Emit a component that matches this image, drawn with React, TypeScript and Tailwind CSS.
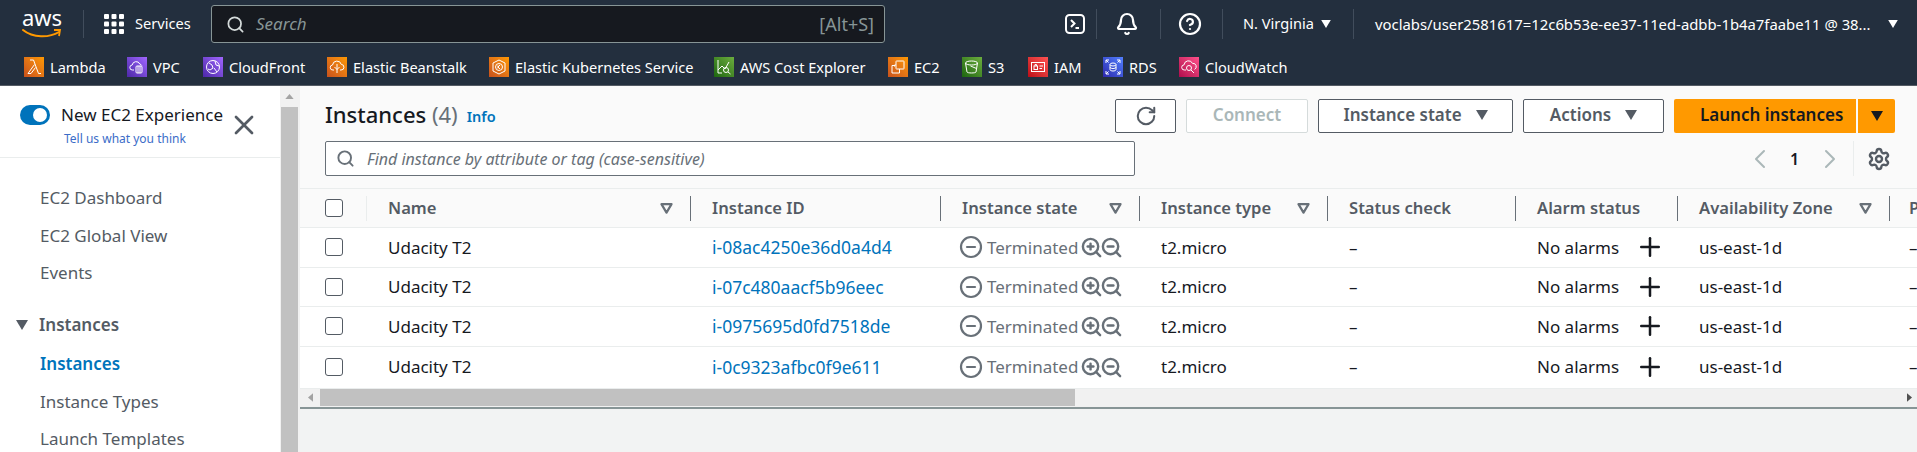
import { Bell, ChevronLeft, ChevronRight, CircleHelp, CircleMinus, Plus, RotateCw, Search, Settings, X, ZoomIn, ZoomOut } from 'lucide-react'
import type { ReactNode } from 'react'

const shortcuts: { name: string; width: string; bg: string; glyph: ReactNode }[] = [
  {
    name: 'Lambda',
    width: 'w-[103px]',
    bg: 'from-[#c8511b] to-[#ff9900]',
    glyph: <path d="M6 3h3.5l5 13.5H17M10.5 7.5L4 16.5h3l4.5-6" />,
  },
  {
    name: 'VPC',
    width: 'w-[76px]',
    bg: 'from-[#4d27a8] to-[#a166ff]',
    glyph: (
      <>
        <path d="M7 13H5.5a2.5 2.5 0 0 1-.3-5 4 4 0 0 1 7.6-1 3 3 0 0 1 2 1.5" />
        <rect x="9" y="9" width="6" height="7" rx="1" />
        <path d="M11 9v7M13 9v7" />
      </>
    ),
  },
  {
    name: 'CloudFront',
    width: 'w-[124px]',
    bg: 'from-[#4d27a8] to-[#a166ff]',
    glyph: (
      <>
        <circle cx="10" cy="10" r="6.5" />
        <path d="M6 6l3 2 1 3-3 2-2-1M12 4l1 4 3 1M11 11l3 4" />
      </>
    ),
  },
  {
    name: 'Elastic Beanstalk',
    width: 'w-[162px]',
    bg: 'from-[#c8511b] to-[#ff9900]',
    glyph: (
      <>
        <path d="M7 13H6a2.5 2.5 0 0 1-.5-5 4.5 4.5 0 0 1 8.8-.6A2.8 2.8 0 0 1 14 13h-1" />
        <path d="M10 7v9M7.5 10L10 12.5 12.5 10" />
      </>
    ),
  },
  {
    name: 'Elastic Kubernetes Service',
    width: 'w-[225px]',
    bg: 'from-[#c8511b] to-[#ff9900]',
    glyph: (
      <>
        <path d="M10 3l6 3v8l-6 3-6-3V6z" />
        <circle cx="10" cy="10" r="3.5" />
        <path d="M9 8.5v3M11 8l-2 2 2 2" />
      </>
    ),
  },
  {
    name: 'AWS Cost Explorer',
    width: 'w-[174px]',
    bg: 'from-[#1b660f] to-[#6cae3e]',
    glyph: (
      <>
        <path d="M4 3v13h4M4 13l4-4 3 3 4-7" />
        <circle cx="12" cy="13" r="2.5" />
        <path d="M14 15l2.5 2" />
      </>
    ),
  },
  {
    name: 'EC2',
    width: 'w-[74px]',
    bg: 'from-[#c8511b] to-[#ff9900]',
    glyph: (
      <>
        <rect x="8" y="4" width="8" height="8" rx="0.5" />
        <path d="M8 8H6.5v1.5M6 8.5H4V16h7.5v-4" />
      </>
    ),
  },
  {
    name: 'S3',
    width: 'w-[66px]',
    bg: 'from-[#1b660f] to-[#6cae3e]',
    glyph: (
      <>
        <ellipse cx="9.5" cy="6" rx="6" ry="2" />
        <path d="M3.5 6l1.5 9c.3 1.3 8.7 1.3 9 0l1.5-9M8.5 9l6 2.5" />
      </>
    ),
  },
  {
    name: 'IAM',
    width: 'w-[75px]',
    bg: 'from-[#bd0816] to-[#ff5252]',
    glyph: (
      <>
        <rect x="3.5" y="5.5" width="13" height="9" />
        <rect x="6" y="9" width="3.5" height="3.5" />
        <path d="M7 9V7.5h1.5V9M11.5 9H15M11.5 11.5H14" />
      </>
    ),
  },
  {
    name: 'RDS',
    width: 'w-[76px]',
    bg: 'from-[#2e27ad] to-[#527fff]',
    glyph: (
      <>
        <ellipse cx="10" cy="7.5" rx="3" ry="1.5" />
        <path d="M7 7.5v5c0 2 6 2 6 0v-5M7 10c0 2 6 2 6 0" />
        <path d="M3 6V3h3M14 3h3v3M3 14v3h3M14 17h3v-3M3 3l2.5 2.5M17 3l-2.5 2.5M3 17l2.5-2.5M17 17l-2.5-2.5" />
      </>
    ),
  },
  {
    name: 'CloudWatch',
    width: 'w-[120px]',
    bg: 'from-[#b0084d] to-[#ff4f8b]',
    glyph: (
      <>
        <path d="M7 13H5.5a2.6 2.6 0 0 1-.4-5.2 4.4 4.4 0 0 1 8.4-1.4 3.2 3.2 0 0 1 2 6" />
        <circle cx="10" cy="11" r="2.5" />
        <path d="M12 13l3 3" />
      </>
    ),
  },
]

const instances = ['i-08ac4250e36d0a4d4', 'i-07c480aacf5b96eec', 'i-0975695d0fd7518de', 'i-0c9323afbc0f9e611']

const navTop = ['EC2 Dashboard', 'EC2 Global View', 'Events']

function Caret({ className }: { className: string }) {
  return (
    <svg viewBox="0 0 12 10" className={className}>
      <path d="M0 0h12L6 10z" fill="currentColor" />
    </svg>
  )
}

function SortCaret() {
  return (
    <svg viewBox="0 0 14 12" className="h-[11px] w-[13px] text-[#687078]">
      <path d="M1.5 1.2h11L7 10.5z" fill="none" stroke="currentColor" strokeWidth="2.4" strokeLinejoin="round" />
    </svg>
  )
}

function Checkbox() {
  return <div className="h-[18px] w-[18px] rounded-[3px] border border-[#545b64] bg-white" />
}

function HeaderIconDivider() {
  return <div className="h-[30px] w-px bg-[#414d5c]" />
}

function Header() {
  return (
    <header className="h-[85px] bg-[#232f3e] text-white">
      <div className="flex h-[48px] items-center">
        <div className="ml-[22px] flex w-[40px] flex-col items-center">
          <span className="mt-[-3px] h-[20px] text-[22px] leading-[20px] tracking-[0px]">aws</span>
          <svg viewBox="0 0 40 10" className="mt-[2px] h-[10px] w-[40px]">
            <path d="M1 1c10 8 26 8 36 2" fill="none" stroke="#ff9900" strokeWidth="2" strokeLinecap="round" />
            <path d="M32 1l6 0-1 6" fill="none" stroke="#ff9900" strokeWidth="1.8" />
          </svg>
        </div>
        <div className="ml-[21px] h-[28px] w-px bg-[#414d5c]" />
        <svg viewBox="0 0 20 20" className="ml-[20px] h-[20px] w-[20px] fill-white">
          <rect x="0" y="0" width="5" height="5" rx="1" />
          <rect x="7.5" y="0" width="5" height="5" rx="1" />
          <rect x="15" y="0" width="5" height="5" rx="1" />
          <rect x="0" y="7.5" width="5" height="5" rx="1" />
          <rect x="7.5" y="7.5" width="5" height="5" rx="1" />
          <rect x="15" y="7.5" width="5" height="5" rx="1" />
          <rect x="0" y="15" width="5" height="5" rx="1" />
          <rect x="7.5" y="15" width="5" height="5" rx="1" />
          <rect x="15" y="15" width="5" height="5" rx="1" />
        </svg>
        <span className="ml-[11px] w-[56px] text-[14.6px] whitespace-nowrap">Services</span>
        <div className="ml-[20px] flex h-[38px] w-[674px] items-center rounded-[3px] border border-[#879596] bg-[#16191f] pr-[10px] pl-[14px]">
          <Search size={19} strokeWidth={2.2} className="text-[#d5dbdb]" />
          <span className="ml-[11px] flex-1 text-[17px] text-[#879596] italic">Search</span>
          <span className="text-[18px] text-[#879596]">[Alt+S]</span>
        </div>
        <svg viewBox="0 0 20 20" className="ml-[180px] h-[20px] w-[20px]" fill="none" stroke="white" strokeWidth="2">
          <rect x="1" y="1" width="18" height="18" rx="3.5" />
          <path d="M6 6l3.5 3.5L6 13M10.5 14H14" />
        </svg>
        <div className="ml-[11px]">
          <HeaderIconDivider />
        </div>
        <Bell size={24} strokeWidth={2.2} className="ml-[18px] text-white" />
        <div className="ml-[21px]">
          <HeaderIconDivider />
        </div>
        <CircleHelp size={24} strokeWidth={2.2} className="ml-[17px] text-white" />
        <div className="ml-[20px]">
          <HeaderIconDivider />
        </div>
        <span className="ml-[20px] w-[71px] text-[14.6px] whitespace-nowrap">N. Virginia</span>
        <Caret className="ml-[7px] h-[8px] w-[10px] text-white" />
        <div className="ml-[22px]">
          <HeaderIconDivider />
        </div>
        <span className="ml-[21px] w-[506px] text-[14.85px] whitespace-nowrap">
          voclabs/user2581617=12c6b53e-ee37-11ed-adbb-1b4a7faabe11 @ 38...
        </span>
        <Caret className="ml-[7px] h-[8px] w-[10px] text-white" />
      </div>
      <div className="flex h-[37px] items-start pt-[9px] pl-[24px]">
        {shortcuts.map((s) => (
          <div key={s.name} className={`flex shrink-0 items-center ${s.width}`}>
            <div className={`h-[20px] w-[20px] bg-gradient-to-tr ${s.bg}`}>
              <svg viewBox="0 0 20 20" className="h-[20px] w-[20px]" fill="none" stroke="white" strokeWidth="1">
                {s.glyph}
              </svg>
            </div>
            <span className="ml-[6px] text-[14.6px] leading-[20px] whitespace-nowrap">{s.name}</span>
          </div>
        ))}
      </div>
    </header>
  )
}

function Sidebar() {
  return (
    <aside className="flex w-[300px] shrink-0 overflow-hidden bg-white">
      <div className="w-[280px]">
        <div className="h-[72px] border-b border-[#eaeded]">
          <div className="flex pt-[19px] pl-[20px]">
            <div className="flex h-[20px] w-[30px] items-center justify-end rounded-full bg-[#0073bb] pr-[3px]">
              <div className="h-[14px] w-[14px] rounded-full bg-white" />
            </div>
            <div className="ml-[11px]">
              <div className="text-[17px] leading-[20px] whitespace-nowrap text-[#16191f]">New EC2 Experience</div>
              <div className="mt-[5px] ml-[3px] text-[12px] leading-[18px] whitespace-nowrap text-[#3b6cc8]">
                Tell us what you think
              </div>
            </div>
            <X size={32} strokeWidth={2} className="mt-[4px] ml-[5px] shrink-0 text-[#545b64]" />
          </div>
        </div>
        <div className="pt-[21px] pl-[40px] text-[17px] text-[#545b64]">
          {navTop.map((n) => (
            <div key={n} className="flex h-[37.5px] items-center">
              {n}
            </div>
          ))}
        </div>
        <div className="mt-[14px] flex h-[38px] items-center pl-[16px] text-[17px] font-semibold text-[#545b64]">
          <Caret className="h-[10px] w-[12px] text-[#545b64]" />
          <span className="ml-[11px]">Instances</span>
        </div>
        <div className="mt-[1px] pl-[40px] text-[17px] text-[#545b64]">
          <div className="flex h-[38px] items-center font-semibold text-[#0073bb]">Instances</div>
          <div className="flex h-[37.5px] items-center">Instance Types</div>
          <div className="flex h-[37.5px] items-center">Launch Templates</div>
        </div>
      </div>
      <div className="flex w-[20px] flex-col items-center bg-[#f1f1f1] pr-[2px] pl-px">
        <div className="flex h-[21px] items-center">
          <svg viewBox="0 0 10 6" className="h-[5px] w-[9px] text-[#a3a3a3]">
            <path d="M0 6l5-6 5 6z" fill="currentColor" />
          </svg>
        </div>
        <div className="w-full flex-1 bg-[#c1c1c1]" />
      </div>
    </aside>
  )
}

function InstancesTable() {
  return (
    <div className="min-w-0 overflow-hidden">
      <div className="flex h-[40px] w-[1700px] items-center border-y border-[#eaeded] bg-[#fafafa] text-[16.6px] font-semibold text-[#545b64]">
        <div className="flex h-[25px] w-[67px] shrink-0 items-center border-r border-[#eaeded] pl-[25px]">
          <Checkbox />
        </div>
        <div className="flex h-[25px] w-[324px] shrink-0 items-center justify-between border-r border-[#687078] pr-[17px] pl-[21px]">
          <span>Name</span>
          <SortCaret />
        </div>
        <div className="flex h-[25px] w-[250px] shrink-0 items-center border-r border-[#687078] pl-[21px]">Instance ID</div>
        <div className="flex h-[25px] w-[199px] shrink-0 items-center justify-between border-r border-[#687078] pr-[17px] pl-[21px]">
          <span>Instance state</span>
          <SortCaret />
        </div>
        <div className="flex h-[25px] w-[188px] shrink-0 items-center justify-between border-r border-[#687078] pr-[17px] pl-[21px]">
          <span>Instance type</span>
          <SortCaret />
        </div>
        <div className="flex h-[25px] w-[188px] shrink-0 items-center border-r border-[#687078] pl-[21px]">Status check</div>
        <div className="flex h-[25px] w-[162px] shrink-0 items-center border-r border-[#687078] pl-[21px]">Alarm status</div>
        <div className="flex h-[25px] w-[212px] shrink-0 items-center justify-between border-r border-[#687078] pr-[17px] pl-[21px]">
          <span>Availability Zone</span>
          <SortCaret />
        </div>
        <div className="pl-[19px]">Public</div>
      </div>
      {instances.map((id, i) => (
        <div
          key={id}
          className={`flex w-[1700px] items-center border-b border-[#eaeded] bg-white text-[17px] text-[#16191f] ${
            i === 3 ? 'h-[42px]' : 'h-[39.5px]'
          }`}
        >
          <div className="w-[67px] shrink-0 pl-[25px]">
            <Checkbox />
          </div>
          <div className="w-[324px] shrink-0 pl-[21px]">Udacity T2</div>
          <div className="w-[250px] shrink-0 pl-[21px] text-[17.5px] text-[#0073bb]">{id}</div>
          <div className="flex w-[199px] shrink-0 items-center pl-[18px] text-[#687078]">
            <CircleMinus size={24} strokeWidth={2.2} className="shrink-0" />
            <span className="ml-[4px]">Terminated</span>
            <ZoomIn size={23} strokeWidth={2.5} className="ml-[2px] shrink-0" />
            <ZoomOut size={23} strokeWidth={2.5} className="ml-[-3px] shrink-0" />
          </div>
          <div className="w-[188px] shrink-0 pl-[21px]">t2.micro</div>
          <div className="w-[188px] shrink-0 pl-[21px]">–</div>
          <div className="flex w-[162px] shrink-0 items-center pl-[21px]">
            <span>No alarms</span>
            <Plus size={30} strokeWidth={2} className="ml-[16px] text-[#16191f]" />
          </div>
          <div className="w-[212px] shrink-0 pl-[21px]">us-east-1d</div>
          <div className="pl-[19px]">–</div>
        </div>
      ))}
      <div className="flex h-[20px] items-center border-b-2 border-[#879596] bg-[#f1f1f1]">
        <div className="flex w-[20px] shrink-0 justify-center">
          <svg viewBox="0 0 6 10" className="h-[9px] w-[5px] text-[#a3a3a3]">
            <path d="M6 0L0 5l6 5z" fill="currentColor" />
          </svg>
        </div>
        <div className="h-[17px] w-[755px] shrink-0 bg-[#c1c1c1]" />
        <div className="flex flex-1 justify-end pr-[5px]">
          <svg viewBox="0 0 6 10" className="h-[9px] w-[5px] text-[#505050]">
            <path d="M0 0l6 5-6 5z" fill="currentColor" />
          </svg>
        </div>
      </div>
    </div>
  )
}

function Main() {
  return (
    <main className="flex min-w-0 flex-1 flex-col bg-[#f2f3f3]">
      <div className="h-[102px] bg-[#fafafa] pt-[13px] pr-[22px] pl-[25px]">
        <div className="flex h-[34px] items-center">
          <h1 className="mt-[-3px] text-[22px] font-medium text-[#16191f]">
            Instances <span className="font-normal text-[#687078]">(4)</span>
          </h1>
          <span className="mt-[2px] ml-[9px] text-[14.5px] font-semibold text-[#0073bb]">Info</span>
          <button className="ml-auto flex h-[34px] w-[61px] items-center justify-center rounded-[2px] border border-[#545b64] bg-white text-[#545b64]">
            <RotateCw size={22} strokeWidth={2.2} />
          </button>
          <button className="ml-[10px] h-[34px] w-[122px] rounded-[2px] border border-[#d5dbdb] bg-white pb-[2px] text-[17px] font-semibold text-[#aab7b8]">
            Connect
          </button>
          <button className="ml-[10px] flex h-[34px] w-[195px] items-center justify-center gap-[14px] rounded-[2px] border border-[#545b64] bg-white pb-[2px] text-[17px] font-semibold text-[#545b64]">
            Instance state
            <Caret className="h-[10px] w-[12px] text-[#545b64]" />
          </button>
          <button className="ml-[10px] flex h-[34px] w-[141px] items-center justify-center gap-[14px] rounded-[2px] border border-[#545b64] bg-white pb-[2px] text-[17px] font-semibold text-[#545b64]">
            Actions
            <Caret className="h-[10px] w-[12px] text-[#545b64]" />
          </button>
          <button className="ml-[10px] h-[34px] w-[182px] rounded-l-[2px] bg-[#ff9900] pb-[2px] pl-[26px] text-left text-[17px] font-semibold whitespace-nowrap text-[#16191f]">
            Launch instances
          </button>
          <button className="ml-[2px] flex h-[34px] w-[37px] items-center justify-center rounded-r-[2px] bg-[#ff9900]">
            <Caret className="h-[10px] w-[12px] text-[#16191f]" />
          </button>
        </div>
        <div className="mt-[8px] flex h-[35px] items-center">
          <div className="flex h-[35px] w-[810px] shrink-0 items-center rounded-[2px] border border-[#687078] bg-white pl-[10px]">
            <Search size={19} strokeWidth={2.4} className="text-[#687078]" />
            <span className="ml-[12px] text-[16px] text-[#687078] italic">Find instance by attribute or tag (case-sensitive)</span>
          </div>
          <ChevronLeft size={32} strokeWidth={1.5} className="ml-[609px] shrink-0 text-[#aab7b8]" />
          <span className="ml-[14px] w-[10px] text-[16px] font-semibold text-[#16191f]">1</span>
          <ChevronRight size={32} strokeWidth={1.5} className="ml-[14px] shrink-0 text-[#aab7b8]" />
          <div className="ml-[7px] h-[35px] w-px shrink-0 bg-[#eaeded]" />
          <Settings size={24} strokeWidth={2.4} className="ml-[13px] shrink-0 text-[#545b64]" />
        </div>
      </div>
      <InstancesTable />
    </main>
  )
}

export default function App() {
  return (
    <div className="flex h-[452px] w-[1917px] flex-col overflow-hidden font-['Noto_Sans',sans-serif]">
      <Header />
      <div className="flex min-h-0 flex-1 border-t border-[#545b64]">
        <Sidebar />
        <Main />
      </div>
    </div>
  )
}
